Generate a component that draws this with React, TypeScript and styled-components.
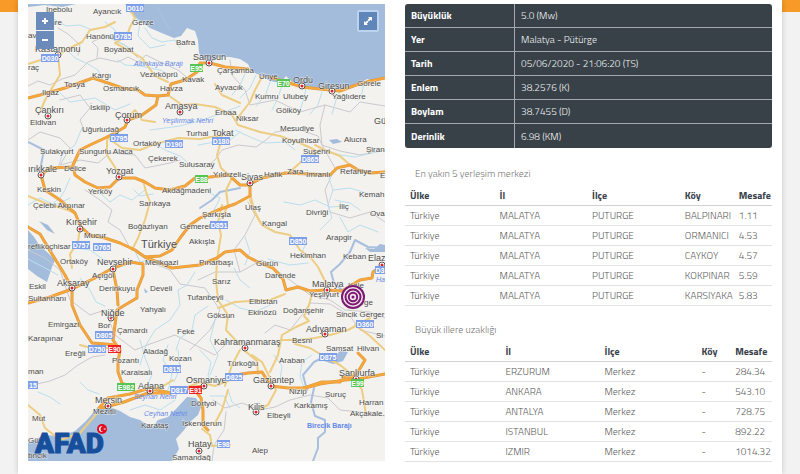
import React from "react";
import styled, { createGlobalStyle } from "styled-components";

const GlobalStyle = createGlobalStyle`
  * { box-sizing: border-box; }
  body {
    margin: 0;
    background: #f2f2f2;
    font-family: "Titillium Web", Roboto, "Liberation Sans", sans-serif;
    font-size: 10px;
    color: #777;
  }
`;

const Page = styled.div`
  min-height: 100vh;
  background: linear-gradient(#f79a28, #f79a28) top / 100% 12px no-repeat;
  padding: 0 18px;
`;

const Sheet = styled.main`
  min-height: 100vh;
  padding: 4px 10px 12px;
  background: #fff;
  box-shadow: 0 0 6px rgba(0, 0, 0, 0.18);
  display: grid;
  grid-template-columns: minmax(0, 357fr) minmax(0, 367fr);
  gap: 20px;
  align-items: start;
`;

const MapPanel = styled.section`
  position: relative;
`;

const MapDrawing = styled.svg`
  display: block;
  width: 100%;
  height: auto;
  background: #f3f2ef;
  font-family: "Liberation Sans", Arial, sans-serif;
`;

const ZoomControls = styled.div`
  position: absolute;
  top: 8px;
  left: 8px;
  display: grid;
  gap: 1px;
`;

const MapButton = styled.button`
  display: flex;
  align-items: center;
  justify-content: center;
  width: 18px;
  height: 18px;
  padding: 0;
  border: 0;
  background: #6b8cba;
  color: #fff;
`;

const ExpandButton = styled(MapButton)`
  position: absolute;
  top: 6px;
  right: 6px;
  width: 22px;
  height: 22px;
  border: 2px solid #bcd3ef;
  border-radius: 2px;
  background: #6085b8;
`;

const InfoTable = styled.table`
  width: 100%;
  margin-bottom: 2px;
  border-collapse: separate;
  border-spacing: 0;
  table-layout: fixed;
  background: #384148;
  color: #f2f4f5;
  border-radius: 3px;

  th,
  td {
    height: 24px;
    padding: 0 5px 0 6px;
    text-align: left;
    border-bottom: 1px solid #a3a9ad;
  }
  th {
    width: 30%;
    border-right: 1px solid #a3a9ad;
    font-weight: 700;
    color: #fff;
  }
  td {
    font-weight: 300;
  }
  tr:last-child > * {
    border-bottom: 0;
  }
`;

const SectionTitle = styled.h2`
  margin: 0;
  padding: 15px 10px 3px;
  font-size: 10px;
  line-height: 18px;
  font-weight: 300;
  color: #777;
`;

const DistanceTable = styled.table`
  width: 100%;
  border-collapse: separate;
  border-spacing: 0;
  table-layout: fixed;

  th,
  td {
    height: 20px;
    padding: 0 0 0 5px;
    text-align: left;
    white-space: nowrap;
    border-bottom: 1px solid #e3e3e3;
  }
  th {
    font-weight: 700;
    color: #38414a;
    border-bottom-color: #d2d2d2;
  }
  td {
    font-weight: 300;
    color: #5c5c5c;
  }
`;

const Col = styled.col<{ $share: number }>`
  width: ${(p) => p.$share}%;
`;

const info = [
  ["Büyüklük", "5.0 (Mw)"],
  ["Yer", "Malatya - Pütürge"],
  ["Tarih", "05/06/2020 - 21:06:20 (TS)"],
  ["Enlem", "38.2576 (K)"],
  ["Boylam", "38.7455 (D)"],
  ["Derinlik", "6.98 (KM)"],
];

const nearest = [
  ["Türkiye", "MALATYA", "PUTURGE", "BALPINARI", "1.11"],
  ["Türkiye", "MALATYA", "PUTURGE", "ORMANICI", "4.53"],
  ["Türkiye", "MALATYA", "PUTURGE", "CAYKOY", "4.57"],
  ["Türkiye", "MALATYA", "PUTURGE", "KOKPINAR", "5.59"],
  ["Türkiye", "MALATYA", "PUTURGE", "KARSIYAKA", "5.83"],
];

const provinces = [
  ["Türkiye", "ERZURUM", "Merkez", "-", "284.34"],
  ["Türkiye", "ANKARA", "Merkez", "-", "543.10"],
  ["Türkiye", "ANTALYA", "Merkez", "-", "728.75"],
  ["Türkiye", "ISTANBUL", "Merkez", "-", "892.22"],
  ["Türkiye", "IZMIR", "Merkez", "-", "1014.32"],
];

const provinceBorders = [
  "28,86 38,81 50,85 62,79 75,75 88,62 100,58 118,62 128,57 138,62 146,55 160,62 178,70 190,80 200,79",
  "97,58 98,48 92,42 105,36 125,45 138,58",
  "58,28 68,34 80,45 78,55",
  "28,140 40,132 60,138 70,148 60,165 80,160 98,163 110,153 135,155 145,168 170,163 180,160",
  "60,100 80,95 90,108 80,120 85,132",
  "205,168 215,160 222,150 238,145 256,147 266,140 275,132 300,130 318,136 322,145 340,151 360,155 385,150",
  "230,60 232,75 245,90 250,105 275,100 300,112 325,105 350,112 360,102 385,106",
  "325,105 320,125 322,145 335,168 325,190 330,212 350,218 370,212 385,222",
  "198,280 215,272 240,272 262,260 290,280 310,295 330,300 345,310 370,312 385,318",
  "240,272 234,250 245,235 255,215 248,202",
  "85,190 100,200 112,210 108,222 120,230 130,248 150,262 170,270 180,284 205,288 220,310 210,330 190,350",
  "28,250 45,258 60,270 70,300 90,315 105,310 115,335 135,350 150,344 175,335 195,345 215,355 230,340 255,345",
  "28,386 50,381 65,375 78,365 92,357 105,355",
  "213,400 225,408 242,403 260,410 275,407 290,400 310,395 328,398 340,410 360,412 385,416",
  "212,461 214,445 224,430 226,412",
  "265,333 275,325 290,330 302,315 310,303 330,304 350,316 360,330 385,336",
];

const rivers = [
  "48,6 52,18 66,26 80,25 92,30",
  "65,48 75,58 88,64 98,70 105,85",
  "105,22 115,30 118,42 130,48",
  "128,10 140,22 138,36 150,48 165,45",
  "145,28 152,38 162,42 175,40 180,48",
  "118,60 125,65 140,66 160,70 170,75",
  "245,74 240,85 232,95", "256,75 250,88 240,98", "270,82 266,94 256,106",
  "282,85 278,98 272,110", "306,88 304,98 300,110", "322,92 318,105 310,114", "341,88 336,100 332,114", "364,82 362,93 358,100",
  "60,93 70,102 95,98 115,110 130,104", "82,128 75,145 62,155 58,168", "70,178 65,190 60,198 52,204",
  "150,130 165,128 180,126 205,119 225,112 240,106", "152,142 165,150 180,156 194,168", "198,145 215,142 230,140 240,132",
  "235,130 250,137 265,143 285,142 295,150", "322,150 340,155 355,157 385,150",
  "100,193 110,202 120,195 132,200 145,190", "134,190 140,196 153,194",
  "28,205 40,198 55,205 70,198", "210,193 220,198 214,210 222,222",
  "284,202 300,205 315,200 330,207 345,206", "328,175 333,190 328,205 332,218 320,230", "333,190 350,188 372,195",
  "340,217 348,232 360,225 378,232", "335,200 350,203 360,210",
  "245,237 250,252 245,265", "268,259 290,265 308,263", "234,268 240,280 250,288", "305,245 300,258",
  "28,259 45,268 58,275", "75,248 90,250 104,260 120,263", "135,251 140,262 150,260", "80,278 90,290 96,302 105,306",
  "195,272 187,285 178,290 180,305 170,320 155,330 146,345 140,365", "208,306 195,315 192,330 180,338 176,350",
  "215,320 210,340 218,355 210,375", "140,340 145,358 152,375 145,390", "168,345 163,360 172,374 168,390 160,398",
  "178,350 180,368 174,382", "130,410 145,405 160,410 175,400", "80,382 88,390 99,394", "38,392 50,397 60,404",
  "226,300 240,308 255,312 270,305", "200,350 211,362 208,376 220,386", "274,355 282,366 280,380",
  "312,355 302,362 300,376 304,388", "228,390 232,402 240,408", "210,396 224,396 230,408",
];

const bigRivers = [
  "385,248 368,247 355,240 350,252 340,264 331,272 334,283 342,290",
  "314,388 311,402 315,416 325,420 325,432 318,438 318,448 313,461",
  "324,357 314,362 303,375 307,390",
  "158,8 163,18 170,30", "28,142 44,150 40,170", "200,208 212,200 220,192 240,188",
];

const yellowRoads = [
  "28,64 44,59 58,55 70,48 82,42 90,30 105,27 115,22", "58,55 60,75 52,88 45,100 40,112",
  "128,6 135,18 130,27 127,36 115,43 128,50 142,58 155,76 168,82", "168,95 182,105 195,104 215,107 232,115",
  "232,115 238,125 260,132 280,136 300,143 315,150", "315,145 325,150 340,156 350,165",
  "262,77 255,90 250,102 236,120", "215,84 222,95 240,103", "108,138 122,148 140,150 155,144 178,138 200,139 222,135",
  "107,140 107,155 122,178", "143,180 146,192 150,202 145,220 138,238 132,250",
  "222,135 220,145 217,155 221,168 232,178 226,190 228,205 222,218",
  "250,200 256,215 262,225 275,232 290,235 300,250", "28,196 45,203 62,208 75,213",
  "155,122 142,120 135,110 128,118", "80,227 78,242 70,254 72,268",
  "222,205 218,222 221,235 217,260 216,280 218,300 228,315 226,330 240,345",
  "218,308 235,302 250,301 270,300 285,294", "300,250 311,258 318,267 326,283",
  "312,294 309,305 304,316 309,321 296,327 282,335 278,355 270,372",
  "282,340 298,340 315,338 330,335 348,330 370,318", "252,355 262,362 270,378 276,390 268,405 256,411",
  "245,351 257,361 258,374", "225,386 232,365 240,350", "228,390 222,410 214,425",
  "28,405 40,415 45,428 60,440 80,433 98,412", "117,310 125,305 137,297",
  "150,390 165,385 173,380", "202,429 210,435 212,446 230,445", "355,379 362,390 364,402 366,415",
  "295,344 310,348 325,357 340,365 355,377", "355,325 370,336 385,350", "80,345 95,349 108,348",
  "188,387 200,382 215,386 230,380", "250,193 254,210 260,222", "320,150 305,158 290,172",
];

const mainRoads = [
  "28,98 40,95 65,88 93,78 108,83 122,88 138,90 145,95 158,96 168,95 171,84 185,80 197,72 200,63 210,63 225,67 248,69",
  "270,77 302,87 320,89 340,91 356,85 370,81 385,78",
  "158,96 156,105 142,115 128,120 125,127 115,133 105,138 90,145 80,150 73,165 75,175 85,182 98,188 110,187 119,178 135,178 145,182 155,188 170,190 185,186 195,178 210,177 230,175",
  "232,178 240,185 250,185 250,196 235,204 218,210 200,218 190,225 180,238 172,250 160,256 145,257 135,250 120,243 105,238 90,235 81,227 75,213 60,200 45,190 41,175 50,168 73,167",
  "250,184 262,178 285,173 310,174 330,175 337,168 350,165 358,170 370,173 385,172",
  "145,257 172,268 200,265 217,258 225,252 240,250 248,257 258,262 273,268 283,279 286,290 298,287 310,291 326,290 342,291 360,280 372,278 373,272 383,265",
  "28,227 40,234 52,254 65,275 72,289 72,305 80,325 92,343 105,344 115,345",
  "28,303 50,297 72,289 95,278 113,268 130,262 143,264 143,275 137,290 137,298 125,305 117,310 115,325 113,340 120,350 118,362 118,372 122,383 130,387",
  "113,270 117,290 118,305",
  "99,408 108,398 130,394 150,388 170,393 190,388 204,386",
  "102,408 124,402 148,393 170,393", "194,389 201,398 203,410 203,425 208,430",
  "230,376 248,373 262,372 271,386 288,388 305,388 320,384 345,380 358,379 385,374",
  "304,388 322,382 340,382 344,377 355,377 365,360 358,353",
];

const towns: [string, number, number][] = [
  ["İnebolu", 46, 12], ["Ayancık", 93, 14], ["Gerze", 132, 25], ["Küre", 45, 25], ["avas", 28, 38], ["Hanönü", 86, 39],
  ["Boyabat", 104, 52], ["Bafra", 176, 45], ["raç", 28, 70], ["Kargı", 92, 78], ["Tosya", 64, 87], ["Ilgaz", 42, 95],
  ["Osmancık", 103, 91], ["Vezirköprü", 140, 77], ["Kavak", 182, 82], ["Havza", 160, 91], ["İskilip", 90, 110],
  ["Çarşamba", 217, 73], ["Ünye", 259, 79], ["Görele", 357, 86], ["Ayvacık", 215, 90], ["Kumru", 255, 99],
  ["Ulubey", 283, 99], ["Yağlıdere", 332, 99], ["Erbaa", 215, 115], ["Niksar", 236, 121], ["Gölköy", 276, 113],
  ["Eldivan", 30, 125], ["Uğurludağ", 82, 132], ["Mesudiye", 280, 131], ["Koyulhisar", 282, 143], ["Alucra", 344, 142],
  ["Sulakyurt", 40, 154], ["Sungurlu Alaca", 79, 154], ["Ortaköy", 133, 146], ["Turhal", 186, 136], ["Suşehri", 303, 154],
  ["Şiran", 366, 152], ["Çekerek", 148, 161], ["Sulusaray", 179, 167], ["Delice", 64, 171], ["Yıldızeli", 213, 177],
  ["Hafik", 264, 177], ["Zara", 287, 174], ["İmranlı", 306, 177], ["Refahiye", 340, 174], ["E", 380, 178],
  ["Keskin", 37, 192], ["Yerköy", 88, 194], ["Akdağmadeni", 162, 193], ["Çelebi Akpınar", 33, 208],
  ["Sarıkaya", 139, 206], ["Kemah", 359, 197], ["Ulaş", 245, 210], ["İliç", 339, 209], ["Divriği", 306, 215],
  ["Ova", 370, 216], ["Şarkışla", 202, 217], ["Boğazlıyan", 128, 229], ["Gemerek", 180, 229], ["Kangal", 262, 226],
  ["Mucur", 84, 238], ["Arapgir", 326, 240], ["reflikoçhisar", 28, 249], ["Akkışla", 189, 244], ["Hekimhan", 290, 258],
  ["Keban", 343, 259], ["Ortaköy", 60, 264], ["Melikgazi", 145, 265], ["Pınarbaşı", 199, 265], ["Gürün", 256, 266],
  ["Açıgöl", 92, 278], ["Darende", 265, 278], ["Sarız", 212, 284], ["Eskil", 29, 289], ["Sultanhanı", 28, 301],
  ["Derinkuyu", 99, 291], ["Develi", 150, 291], ["Tufanbeyli", 187, 300], ["Yeşilyurt", 309, 297], ["Kale", 348, 288],
  ["Yahyalı", 140, 312], ["Elbistan", 249, 304], ["Pütürge", 345, 305], ["Emirgazi", 48, 327], ["Bor", 98, 328],
  ["Göksun", 207, 318], ["Ekinözü", 248, 315], ["Doğanşehir", 283, 313], ["Sincik Gerger", 336, 317],
  ["Çamardı", 117, 333], ["Feke", 177, 334], ["Karapınar", 28, 341], ["Besni", 292, 343], ["Si", 376, 338],
  ["Samsat", 326, 351], ["Hilvan", 357, 351], ["Aladağ", 143, 354], ["Kozan", 169, 361], ["Ereğli", 65, 356],
  ["Türkoğlu", 227, 366], ["Araban", 279, 363], ["Pozantı", 112, 363], ["Karaisalı", 121, 375], ["man", 28, 374],
  ["Nizip", 289, 394], ["Suruç", 325, 397], ["Karkamış", 294, 408], ["Harran", 359, 405], ["Akçakale...", 350, 416],
  ["Mezitli", 93, 414], ["Dörtyol", 191, 406], ["Elbeyli", 267, 418], ["Mut", 32, 421], ["Karataş", 141, 428],
  ["İskenderun", 182, 426], ["Alep", 252, 453], ["Samandağ", 172, 460], ["Gül", 28, 443], ["bncik", 28, 458],
];

const cities: [string, number, number][] = [
  ["Kastamonu", 35, 52], ["Çankırı", 35, 113], ["Çorum", 115, 118], ["Amasya", 165, 109], ["Samsun", 193, 60],
  ["Ordu", 293, 83], ["Giresun", 318, 89], ["Gü", 374, 124], ["Tokat", 212, 136], ["ırıkkale", 28, 172],
  ["Yozgat", 106, 174], ["Sivas", 241, 180], ["Kırşehir", 66, 225], ["Nevşehir", 97, 265], ["Aksaray", 57, 286],
  ["Niğde", 101, 316], ["Malatya", 312, 287], ["Elaz", 368, 261], ["Adıyaman", 306, 332], ["Kahramanmaraş", 214, 345],
  ["Gaziantep", 253, 383], ["Şanlıurfa", 339, 376], ["Kilis", 248, 410], ["Adana", 138, 389], ["Mersin", 95, 403],
  ["Osmaniye", 186, 383], ["Hatay", 188, 447],
];

const markers = [
  [58, 55], [48, 116], [127, 120], [180, 112], [209, 63], [302, 86], [332, 91], [41, 175], [119, 177], [250, 183],
  [80, 229], [113, 269], [72, 288], [111, 318], [327, 290], [382, 265], [325, 334], [245, 348], [271, 386], [356, 379],
  [256, 412], [150, 391], [108, 406], [204, 386], [199, 451],
];

const blue = "#7d9ee8";
const green = "#56c556";
const red = "#ed2024";
const shields: [string, number, number, string][] = [
  ["D010", 126, 4, blue], ["D785", 114, 32, blue], ["D030", 41, 54, blue], ["E95", 190, 64, green], ["E70", 277, 79, green],
  ["D795", 110, 134, blue], ["D190", 165, 140, blue], ["D180", 212, 137, blue], ["D865", 301, 155, blue],
  ["E88", 195, 175, green], ["D851", 210, 221, blue], ["D757", 72, 241, blue], ["D765", 93, 243, blue], ["D850", 289, 237, blue],
  ["D3", 375, 266, blue], ["D805", 95, 331, blue], ["D750", 88, 345, blue], ["E90", 108, 345, red], ["D360", 356, 320, blue],
  ["D875", 319, 353, blue], ["D815", 163, 365, blue], ["D825", 225, 373, blue], ["E982", 117, 383, green],
  ["D817", 170, 386, blue], ["E91", 189, 386, red], ["E99", 351, 379, green], ["15", 28, 381, blue], ["E98", 217, 440, blue],
];

const waters: [string, number, number][] = [
  ["Altınkaya Barajı", 134, 66], ["Yeşilırmak Nehri", 162, 123], ["Seyhan Nehri", 134, 399],
  ["Ceyhan Nehri", 144, 416], ["Ha", 376, 282],
];

const Lines = ({ paths, color, width }: { paths: string[]; color: string; width: number }) => (
  <g fill="none" stroke={color} strokeWidth={width} strokeLinejoin="round" strokeLinecap="round">
    {paths.map((points) => (
      <polyline key={points} points={points} />
    ))}
  </g>
);

const RegionMap = () => (
  <MapDrawing viewBox="28 4 357 457" role="img" aria-label="Türkiye deprem haritası">
    <g fill="#a3bcdc">
      <path d="M28 4H76L62 7L45 5L28 7ZM125 4H385V79L375 81L367 79L354 87L342 89L325 90L312 87L302 86L292 82L286 76L281 83L270 81L260 75L252 72L248 64L240 59L230 57L219 57L210 63L204 60L199 53L198 40L195 31L187 28L181 36L174 38L164 34L150 28L139 20L132 14L129 7Z" />
      <path d="M28 461V443L44 435L61 436L75 431L86 421L98 407L108 406L120 411L130 417L140 420L152 428L158 420L168 417L176 409L187 397L196 398L201 407L198 415L191 421L184 430L176 439L179 449L172 461Z" />
      <path d="M28 230L34 237L40 246L48 253L55 260L52 267L47 282L37 276L28 269ZM39 221L48 225L55 234L47 230ZM144 288L148 292L145 293Z" />
      <path d="M320 357L332 359L340 351L348 352L343 361L333 364L321 360ZM329 140L337 139L342 142L333 144Z" />
      <path d="M365 248L374 249L380 244L385 245V252L370 252Z" />
    </g>
    <Lines paths={provinceBorders} color="#cbc9cd" width={1} />
    <Lines paths={rivers} color="#b9dfee" width={1} />
    <Lines paths={bigRivers} color="#a8bfdd" width={2} />
    <Lines paths={yellowRoads} color="#edcd82" width={2} />
    <Lines paths={mainRoads} color="#dc9a42" width={3} />
    <Lines paths={mainRoads} color="#f6a63a" width={2} />
    <g fill="#6488e8" fontSize={7}>
      <g fontStyle="italic">
        {waters.map(([name, x, y]) => (
          <text key={name} x={x} y={y}>{name}</text>
        ))}
      </g>
      <text x={307} y={428} fontWeight={700}>Birecik Barajı</text>
    </g>
    {markers.map(([x, y]) => (
      <g key={`${x}-${y}`}>
        <circle cx={x} cy={y} r={3} fill="#fff" stroke="#555" />
        <circle cx={x} cy={y} r={1.5} fill="#e51d2b" />
      </g>
    ))}
    <g fill="#4c4c4c" stroke="#f7f6f3" strokeWidth={1} strokeOpacity={0.7} paintOrder="stroke">
      <g fontSize={8}>
        {towns.map(([name, x, y]) => (
          <text key={`${name}-${y}`} x={x} y={y}>{name}</text>
        ))}
      </g>
      <g fontSize={9}>
        {cities.map(([name, x, y]) => (
          <text key={name} x={x} y={y}>{name}</text>
        ))}
      </g>
      <text x={141} y={248} fontSize={11}>Türkiye</text>
    </g>
    {shields.map(([name, x, y, color]) => {
      const width = name.length === 4 ? 18 : name.length === 3 ? 13 : 10;
      return (
        <g key={name}>
          <rect x={x} y={y} width={width} height={8} fill={color} />
          <text x={x + width / 2} y={y + 7} fontSize={7} fontWeight={700} textAnchor="middle" fill="#fff">{name}</text>
        </g>
      );
    })}
    <g fill="none" stroke="#7b1b70" strokeWidth={2}>
      <circle cx={353} cy={297} r={12} fill="#f3e4f0" stroke="none" />
      <circle cx={353} cy={297} r={11} />
      <circle cx={353} cy={297} r={7.5} />
      <circle cx={353} cy={297} r={4.2} />
      <circle cx={353} cy={297} r={1.5} fill="#7b1b70" stroke="none" />
    </g>
    <text x={35} y={453} fontFamily="Roboto" fontWeight={900} fontSize={28} fill="#174f9c" stroke="#174f9c" strokeWidth={1}>AFAD</text>
    <circle cx={102} cy={429} r={5} fill="#e30b20" />
    <path d="M103 426.5A2.8 2.8 0 1 0 103 431.5A2.2 2.2 0 1 1 103 426.5Z" fill="#fff" />
    <path d="M103 429L106 428L105 429L106 430Z" fill="#fff" />
  </MapDrawing>
);

const DistanceList = ({ title, shares, rows }: { title: string; shares: number[]; rows: string[][] }) => (
  <section aria-label={title}>
    <SectionTitle>{title}</SectionTitle>
    <DistanceTable>
      <colgroup>
        {shares.map((share, i) => (
          <Col key={i} $share={share} />
        ))}
      </colgroup>
      <thead>
        <tr>
          {["Ülke", "İl", "İlçe", "Köy", "Mesafe"].map((name) => (
            <th key={name} scope="col">{name}</th>
          ))}
        </tr>
      </thead>
      <tbody>
        {rows.map((row) => (
          <tr key={row.join()}>
            {row.map((cell, i) => (
              <td key={i}>{cell}</td>
            ))}
          </tr>
        ))}
      </tbody>
    </DistanceTable>
  </section>
);

export default function App() {
  return (
    <>
      <GlobalStyle />
      <Page>
        <Sheet>
          <MapPanel>
            <RegionMap />
            <ZoomControls>
              <MapButton type="button" aria-label="Yakınlaştır">
                <svg width="8" height="8" viewBox="0 0 8 8"><path d="M4 1V7M1 4H7" stroke="currentColor" strokeWidth="2" /></svg>
              </MapButton>
              <MapButton type="button" aria-label="Uzaklaştır">
                <svg width="8" height="8" viewBox="0 0 8 8"><path d="M1 4H7" stroke="currentColor" strokeWidth="2" /></svg>
              </MapButton>
            </ZoomControls>
            <ExpandButton type="button" aria-label="Tam ekran">
              <svg width="10" height="10" viewBox="0 0 10 10">
                <path d="M5 1H9V5L7.7 3.7L5.9 5.5L4.5 4.1L6.3 2.3ZM1 5L2.3 6.3L4.1 4.5L5.5 5.9L3.7 7.7L5 9H1Z" fill="currentColor" />
              </svg>
            </ExpandButton>
          </MapPanel>
          <div>
            <InfoTable>
              <tbody>
                {info.map(([label, value]) => (
                  <tr key={label}>
                    <th scope="row">{label}</th>
                    <td>{value}</td>
                  </tr>
                ))}
              </tbody>
            </InfoTable>
            <DistanceList title="En yakın 5 yerleşim merkezi" shares={[24.4, 25.2, 25.3, 14.7, 10.4]} rows={nearest} />
            <DistanceList title="Büyük illere uzaklığı" shares={[26, 27, 26.4, 9.2, 11.4]} rows={provinces} />
          </div>
        </Sheet>
      </Page>
    </>
  );
}
